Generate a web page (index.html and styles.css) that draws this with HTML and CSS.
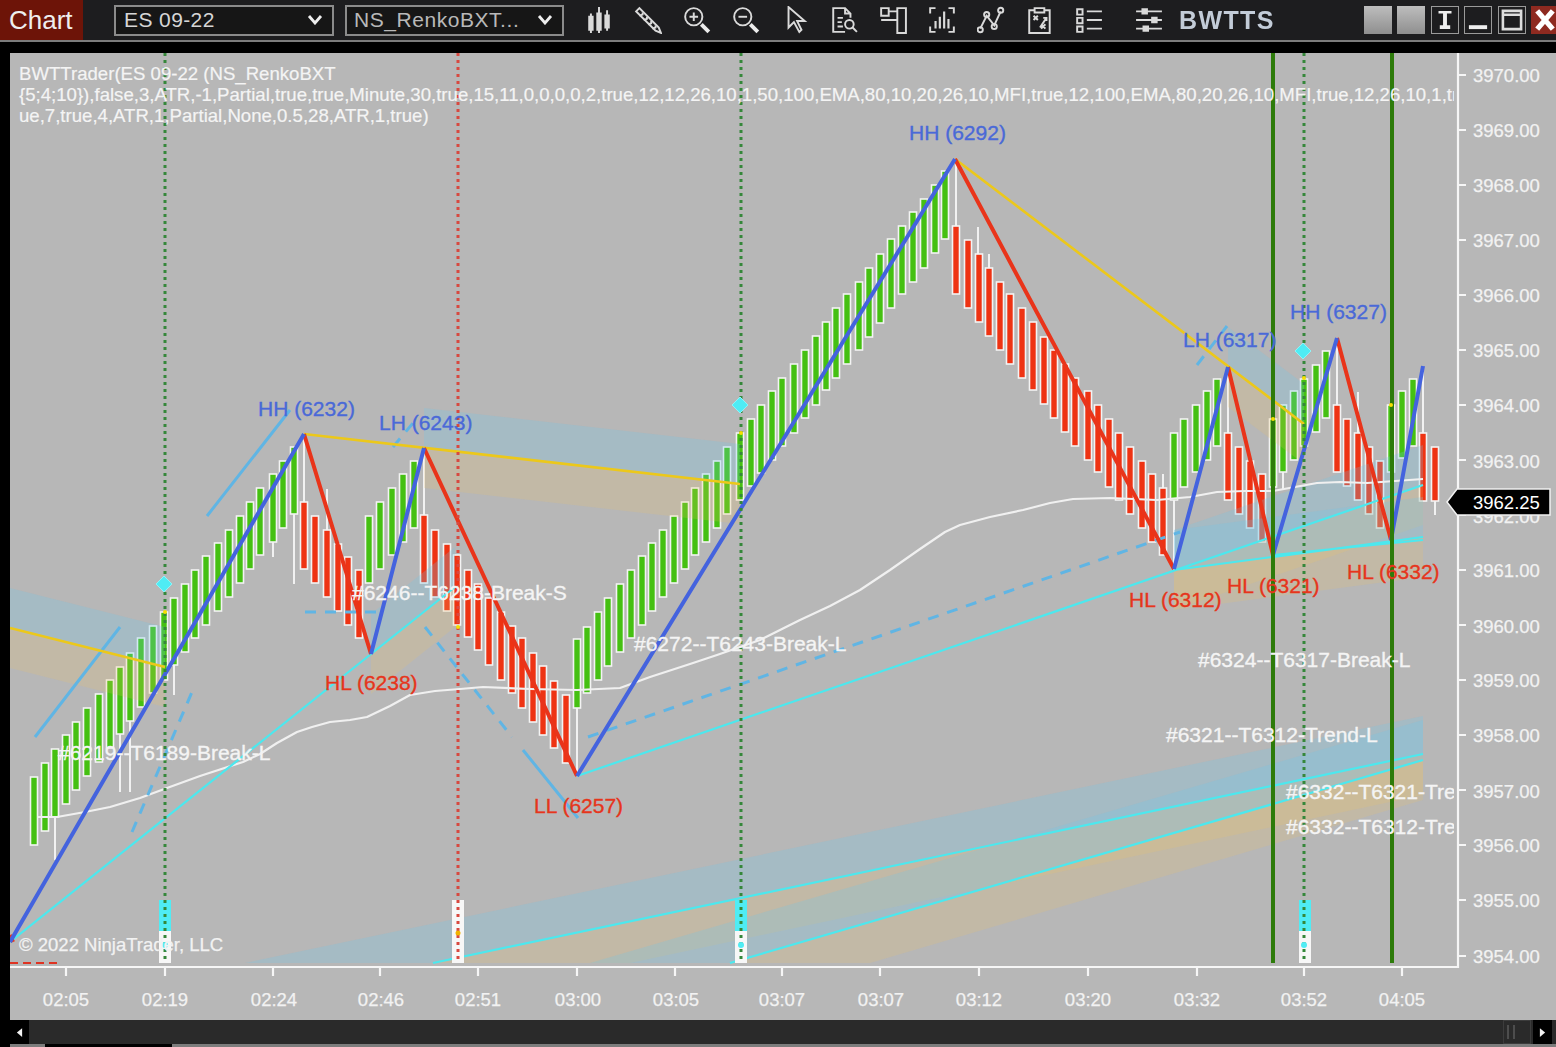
FILE: index.html
```html
<!DOCTYPE html>
<html lang="en">
<head>
<meta charset="utf-8">
<title>Chart</title>
<link rel="stylesheet" href="styles.css">
</head>
<body>
<div class="window">
  <header class="toolbar">
    <div class="tab">Chart</div>
    <div class="select select-instrument"><span>ES 09-22</span><svg class="chev" viewBox="0 0 16 10"><path d="M2 1l6 7 6-7"/></svg></div>
    <div class="select select-type"><span>NS_RenkoBXT...</span><svg class="chev" viewBox="0 0 16 10"><path d="M2 1l6 7 6-7"/></svg></div>
    <div class="tools">
      <svg class="ico" viewBox="0 0 26 26"><path class="fill" d="M3 9h5v14H3zM10.500 6h5v17h-5zM18 8h5v13h-5z"/><path d="M5.500 7v18M13 1v24M20.500 4v19"/></svg>
      <svg class="ico" viewBox="0 0 26 26"><path d="M2 5l3-3 18 18 2 5-5-2z"/><path d="M5 9l3-1 0-2M9 13l3-1 0-2M13 17l3-1 0-2M17 21l3-1 0-2"/></svg>
      <svg class="ico" viewBox="0 0 26 26"><circle cx="10" cy="10" r="8"/><path d="M10 6v8M6 10h8"/><path class="thick" d="M17 17l7 7"/></svg>
      <svg class="ico" viewBox="0 0 26 26"><circle cx="10" cy="10" r="8"/><path d="M6 10h8"/><path class="thick" d="M17 17l7 7"/></svg>
      <svg class="ico" viewBox="0 0 26 26"><path d="M7 1v19l5-5 5 9 2-2-4-8h7z"/></svg>
      <svg class="ico" viewBox="0 0 26 26"><path d="M14 24H3V2h11l5 5v4M14 2v5h5M7 11h5M7 15h4M7 19h5"/><circle cx="18" cy="17" r="4"/><path d="M21 20l4 4"/></svg>
      <svg class="ico" viewBox="0 0 26 26"><path d="M2 2h7v7H2zM9 5h8M2 13h7M9 13h8M17 2h8v23h-8z"/></svg>
      <svg class="ico" viewBox="0 0 26 26"><path d="M7 2H2v5M19 2h5v5M7 24H2v-5M19 24h5v-5"/><path class="fill" d="M6 14h2v7H6zM10 10h2v11h-2zM14 5h2v16h-2zM18 12h2v9h-2z"/></svg>
      <svg class="ico" viewBox="0 0 26 26"><path d="M3 21l6-12 7 9 6-13"/><circle cx="3" cy="22" r="2.400"/><circle cx="9" cy="8" r="2.400"/><circle cx="16" cy="19" r="2.400"/><circle cx="22" cy="4" r="2.400"/></svg>
      <svg class="ico" viewBox="0 0 26 26"><path d="M8 4H3v21h19V4h-5M8 2h9v4H8z"/><path d="M7 9l4 4M11 9l-4 4M13 20l6-9M16 11h3v3M14 17l4 4M18 17l-4 4"/></svg>
      <svg class="ico" viewBox="0 0 26 26"><path d="M2 3h5v5H2zM2 11h5v5H2zM2 19h5v5H2zM11 5h14M11 13h14M11 21h14"/></svg>
      <svg class="ico ico-sliders" viewBox="0 0 26 26"><path d="M1 5h24M1 13h24M1 21h24"/><path class="fill" d="M6 2h6v6H6zM15 10h6v6h-6zM7 18h6v6H7z"/></svg>
    </div>
    <div class="brand">BWTTS</div>
    <div class="winbtns">
      <div class="winbtn solid"></div>
      <div class="winbtn solid"></div>
      <div class="winbtn"><svg viewBox="0 0 20 20"><path class="w-fill" d="M5 3h10v2h-3.500v9H14v3H6v-3h2.500V5H5z"/></svg></div>
      <div class="winbtn"><svg viewBox="0 0 20 20"><path class="w-fill" d="M3 14h14v3H3z"/></svg></div>
      <div class="winbtn"><svg viewBox="0 0 20 20"><path class="w-line" d="M3 3h14v14H3zM3 6h14"/></svg></div>
      <div class="winbtn close"><svg viewBox="0 0 20 20"><path class="w-x" d="M4 3l12 14M16 3L4 17"/></svg></div>
    </div>
  </header>

  <main class="panel">
    <svg class="chart" viewBox="10 53 1546 967" width="1546" height="967">
      <defs><clipPath id="plot"><rect x="10" y="53" width="1444" height="914"/></clipPath></defs>

      <g clip-path="url(#plot)">
        <path class="wick" d="M55 817V860M120 733V792M130 721V792M174 665V695M273 542V557M294 514V584M304 434V502M327 489V530M424 449V516M577 708V775M956 160V226M978 227V254M989 254V268M1163 474V488M1174 500V570M1228 367V433M1283 472V490M1337 340V405M1358 392V433M1423 366V433M1435 501V515"/>
        <g id="candles"></g>

        <polygon class="blue" points="10,588 165,627 165,667 10,628"/>
        <polygon class="tan" points="10,628 165,667 165,707 10,668"/>
        <polygon class="blue" points="424,408 740,444 740,484 424,448"/>
        <polygon class="tan" points="424,448 740,484 740,524 424,488"/>
        <polygon class="blue" points="371,614 455,547 455,587 371,654"/>
        <polygon class="tan" points="371,654 455,587 455,627 371,694"/>
        <polygon class="blue" points="1228,327 1304,384 1304,424 1228,367"/>
        <polygon class="tan" points="1228,367 1304,424 1304,464 1228,407"/>
        <polygon class="blue" points="1174,530 1423,445 1423,485 1174,570"/>
        <polygon class="tan" points="1174,570 1423,485 1423,525 1174,610"/>
        <polygon class="blue" points="1174,530 1423,497 1423,537 1174,570"/>
        <polygon class="tan" points="1174,570 1423,537 1423,577 1174,610"/>
        <polygon class="blue" points="245,963 1423,716 1423,754 433,963"/>
        <polygon class="tan" points="433,963 1423,754 1423,795 630,963"/>
        <polygon class="blue" points="590,963 1423,720 1423,760 730,963"/>
        <polygon class="tan" points="730,963 1423,760 1423,800 870,963"/>

        <path class="ma" d="M37 817L57 817 85 812 110 807 140 798 167 788 200 776 243 762 260 754 277 743 297 732 312 727 330 722 350 720 367 717 390 706 410 695 435 691 460 689 483 687 530 689 577 690 620 688 650 677 690 664 717 655 760 640 800 620 830 606 860 590 890 570 920 549 945 532 960 525 990 517 1023 510 1050 503 1073 499 1110 498 1157 500 1190 497 1217 492 1245 491 1273 491 1295 487 1317 483 1340 482 1367 483 1395 481 1423 479"/>

        <path class="ray" d="M207 516L290 410M35 737L120 627M523 750L578 818"/>
        <path class="ray dashed" d="M132 832L195 685M305 612H382M393 447L413 423M425 627L512 737M588 737L1180 532M1197 365L1227 326"/>

        <path class="cyan" d="M10 942L455 587M577 776L1423 485M1174 570L1423 537M1273 555L1423 540M433 963L1423 754M730 963L1423 760"/>
        <path class="yellow" d="M10 628L165 667M304 434L740 484M955 159L1304 424"/>

        <path class="zz-red" d="M10 935L13 942M304 434L371 654M424 448L577 776M955 159L1174 569M1228 367L1273 555M1337 338L1391 540"/>
        <path class="zz-blue" d="M10 942L304 434M371 654L424 448M577 776L955 159M1174 569L1228 367M1273 555L1337 338M1391 540L1423 366"/>

        <rect class="mk-c" x="159" y="900" width="12" height="31"/><rect class="mk-w" x="159" y="931" width="12" height="32"/>
        <rect class="mk-w" x="452" y="900" width="12" height="63"/>
        <rect class="mk-c" x="735" y="900" width="12" height="31"/><rect class="mk-w" x="735" y="931" width="12" height="32"/>
        <rect class="mk-c" x="1299" y="900" width="12" height="31"/><rect class="mk-w" x="1299" y="931" width="12" height="32"/>

        <path class="dot-g" d="M165 53V963M741 53V963M1304 53V963"/>
        <path class="dot-r" d="M458 53V963"/>
        <path class="solid-g" d="M1273 53V963M1392 53V963"/>
        <path class="dash-r" d="M10 963H57"/>

        <circle class="pt-y" cx="165" cy="612" r="2"/><circle class="pt-y" cx="458" cy="627" r="2"/><circle class="pt-y" cx="741" cy="433" r="2"/><circle class="pt-y" cx="1273" cy="419" r="2"/><circle class="pt-y" cx="1304" cy="378" r="2"/><circle class="pt-y" cx="1391" cy="405" r="2"/>
        <circle class="pt-o" cx="458" cy="933" r="2.500"/><circle class="pt-c" cx="1304" cy="945" r="3"/><circle class="pt-c" cx="741" cy="945" r="3"/><circle class="pt-c" cx="165" cy="945" r="3"/>
        <polygon class="diamond" points="164,576 172,584 164,592 156,584"/>
        <polygon class="diamond" points="740,397 748,405 740,413 732,405"/>
        <polygon class="diamond" points="1303,343 1311,351 1303,359 1295,351"/>

        <text class="params" x="19" y="80">BWTTrader(ES 09-22 (NS_RenkoBXT</text>
        <text class="params" x="19" y="101">{5;4;10}),false,3,ATR,-1,Partial,true,true,Minute,30,true,15,11,0,0,0,0,2,true,12,12,26,10,1,50,100,EMA,80,10,20,26,10,MFI,true,12,100,EMA,80,20,26,10,MFI,true,12,26,10,1,tr</text>
        <text class="params" x="19" y="122">ue,7,true,4,ATR,1,Partial,None,0.5,28,ATR,1,true)</text>

        <text class="lb lb-b" x="258" y="416">HH (6232)</text>
        <text class="lb lb-b" x="379" y="430">LH (6243)</text>
        <text class="lb lb-b" x="909" y="140">HH (6292)</text>
        <text class="lb lb-b" x="1183" y="347">LH (6317)</text>
        <text class="lb lb-b" x="1290" y="319">HH (6327)</text>
        <text class="lb lb-r" x="325" y="690">HL (6238)</text>
        <text class="lb lb-r" x="534" y="813">LL (6257)</text>
        <text class="lb lb-r" x="1129" y="607">HL (6312)</text>
        <text class="lb lb-r" x="1227" y="593">HL (6321)</text>
        <text class="lb lb-r" x="1347" y="579">HL (6332)</text>
        <text class="lb lb-w" x="352" y="600">#6246--T6238-Break-S</text>
        <text class="lb lb-w" x="58" y="760">#6219--T6189-Break-L</text>
        <text class="lb lb-w" x="634" y="651">#6272--T6243-Break-L</text>
        <text class="lb lb-w" x="1198" y="667">#6324--T6317-Break-L</text>
        <text class="lb lb-w" x="1166" y="742">#6321--T6312-Trend-L</text>
        <text class="lb lb-w" x="1286" y="799">#6332--T6321-Tre</text>
        <text class="lb lb-w" x="1286" y="834">#6332--T6312-Tre</text>
        <text class="copy" x="19" y="951">© 2022 NinjaTrader, LLC</text>
      </g>

      <path class="axis" d="M1458 53V967H10M1458 75h8M1458 130h8M1458 185h8M1458 240h8M1458 295h8M1458 350h8M1458 405h8M1458 460h8M1458 515h8M1458 570h8M1458 625h8M1458 680h8M1458 735h8M1458 790h8M1458 845h8M1458 900h8M1458 956h8M66 967v9M165 967v9M273 967v9M380 967v9M478 967v9M577 967v9M675 967v9M782 967v9M880 967v9M979 967v9M1088 967v9M1197 967v9M1304 967v9M1402 967v9"/>

      <g class="prices">
        <text x="1473" y="82">3970.00</text><text x="1473" y="137">3969.00</text><text x="1473" y="192">3968.00</text><text x="1473" y="247">3967.00</text><text x="1473" y="302">3966.00</text><text x="1473" y="357">3965.00</text><text x="1473" y="412">3964.00</text><text x="1473" y="468">3963.00</text><text x="1473" y="523">3962.00</text><text x="1473" y="577">3961.00</text><text x="1473" y="633">3960.00</text><text x="1473" y="687">3959.00</text><text x="1473" y="742">3958.00</text><text x="1473" y="798">3957.00</text><text x="1473" y="852">3956.00</text><text x="1473" y="907">3955.00</text><text x="1473" y="963">3954.00</text>
      </g>
      <polygon class="tag" points="1447,502 1457,489 1550,489 1550,515 1457,515"/>
      <text class="tag-text" x="1473" y="509">3962.25</text>

      <g class="times">
        <text x="66" y="1006">02:05</text><text x="165" y="1006">02:19</text><text x="274" y="1006">02:24</text><text x="381" y="1006">02:46</text><text x="478" y="1006">02:51</text><text x="578" y="1006">03:00</text><text x="676" y="1006">03:05</text><text x="782" y="1006">03:07</text><text x="881" y="1006">03:07</text><text x="979" y="1006">03:12</text><text x="1088" y="1006">03:20</text><text x="1197" y="1006">03:32</text><text x="1304" y="1006">03:52</text><text x="1402" y="1006">04:05</text>
      </g>
    </svg>

    <div class="scrollbar">
      <div class="sb-btn"><svg viewBox="0 0 8 12"><path d="M7 1v10L1 6z"/></svg></div>
      <div class="sb-track"></div>
      <div class="sb-thumb"><i></i><i></i></div>
      <div class="sb-btn"><svg viewBox="0 0 8 12"><path d="M1 1v10l6-5z"/></svg></div>
    </div>
    <div class="footer-strip"><div class="notch"></div></div>
  </main>
</div>
<script src="script.js"></script>
</body>
</html>
```

FILE: styles.css
```css
* { box-sizing: border-box; }
html, body { margin: 0; height: 100%; background: #000; overflow: hidden; }
.window { width: 1556px; height: 1047px; display: flex; flex-direction: column; font-family: "Liberation Sans", Arial, sans-serif; filter: blur(0.6px); }

.toolbar { height: 42px; flex: none; display: flex; align-items: center; background: #1d1d1f; border-bottom: 2px solid #7c7c7c; color: #ddd; }
.tab { width: 83px; height: 40px; background: #6d1408; color: #eee; font-size: 26px; line-height: 40px; padding-left: 9px; flex: none; }
.select { height: 31px; border: 2px solid #8b8b8b; background: #161616; display: flex; align-items: center; justify-content: space-between; padding: 0 9px 0 8px; font-size: 21px; color: #d6d6d6; letter-spacing: .4px; flex: none; }
.select-instrument { width: 220px; margin-left: 31px; }
.select-type { width: 219px; margin-left: 11px; padding-left: 7px; color: #b9b9b9; letter-spacing: .55px; }
.chev { width: 16px; height: 10px; fill: none; stroke: #eee; stroke-width: 2.8; }
.tools { display: flex; align-items: center; gap: 21px; margin-left: 21px; }
.ico { width: 28px; height: 28px; fill: none; stroke: #dadada; stroke-width: 1.8; flex: none; }
.ico .fill { fill: #dadada; stroke: none; }
.ico .thick { stroke: #ececec; stroke-width: 3.6; }
.ico-sliders { margin-left: 11px; }
.brand { margin-left: 16px; font-size: 25px; font-weight: 700; letter-spacing: 1.4px; color: #c3ccd8; }
.winbtns { margin-left: auto; display: flex; gap: 5.5px; align-items: center; margin-right: -3px; }
.winbtn { width: 28px; height: 28px; border: 1.5px solid #9a9a9a; background: #1d1d1f; flex: none; }
.winbtn svg { display: block; width: 100%; height: 100%; }
.winbtn.solid { background: linear-gradient(#bdbdbd, #8f8f8f); border: none; }
.winbtn.close { background: #8e2a20; border-color: #8e2a20; }
.w-fill { fill: #eee; }
.w-line { fill: none; stroke: #ddd; stroke-width: 2; }
.w-x { fill: none; stroke: #fff; stroke-width: 4; }

.panel { flex: 1; margin-top: 11px; margin-left: 10px; display: flex; flex-direction: column; min-height: 0; }
.chart { display: block; flex: none; background: #b7b7b7; }

.wick { fill: none; stroke: #f1f1f1; stroke-width: 2; }
.bd-g { fill: #45c012; stroke: #f3f3f3; stroke-width: 1.6; }
.bd-r { fill: #ee3313; stroke: #f3f3f3; stroke-width: 1.6; }
.blue { fill: rgba(110, 200, 235, .25); }
.tan { fill: rgba(240, 195, 100, .2); }
.ma { fill: none; stroke: #f0f0f0; stroke-width: 2.2; stroke-linejoin: round; }
.ray { fill: none; stroke: #60b5e4; stroke-width: 3; }
.ray.dashed { stroke-dasharray: 11 9; }
.cyan { fill: none; stroke: #4ce8ee; stroke-width: 2.2; }
.yellow { fill: none; stroke: #ecc81a; stroke-width: 2.6; }
.zz-red { fill: none; stroke: #e9341a; stroke-width: 4; }
.zz-blue { fill: none; stroke: #4463de; stroke-width: 4; }
.mk-c { fill: #4fecf4; }
.mk-w { fill: #f7f7f7; }
.dot-g { fill: none; stroke: #35873a; stroke-width: 3; stroke-dasharray: 3 4; }
.dot-r { fill: none; stroke: #d8483f; stroke-width: 3; stroke-dasharray: 3 4; }
.solid-g { fill: none; stroke: #2d7b0a; stroke-width: 4; }
.dash-r { fill: none; stroke: #df3322; stroke-width: 2; stroke-dasharray: 8 5; }
.pt-y { fill: #f5e000; }
.pt-o { fill: #f0b400; }
.pt-c { fill: #4fecf4; }
.diamond { fill: #4fecf4; stroke: #8df3f7; stroke-width: 1; }

.params { font-size: 18.6px; fill: #f4f4f4; stroke: #f4f4f4; stroke-width: .2px; }
.lb { font-size: 21px; stroke-width: .35px; }
.lb-b { fill: #4a69d8; stroke: #4a69d8; }
.lb-r { fill: #e6351c; stroke: #e6351c; }
.lb-w { fill: #f4f4f4; stroke: #f4f4f4; }
.copy { font-size: 18.5px; fill: #f2f2f2; stroke: #f2f2f2; stroke-width: .25px; }
.axis { fill: none; stroke: #f6f6f6; stroke-width: 2.2; }
.prices text, .times text { font-size: 18.5px; fill: #f2f2f2; stroke: #f2f2f2; stroke-width: .25px; }
.times text { text-anchor: middle; }
.tag { fill: #000; stroke: #f1f1f1; stroke-width: 1.5; }
.tag-text { font-size: 18.5px; fill: #fff; }

.scrollbar { height: 24px; flex: none; background: #2a2a2a; display: flex; align-items: center; }
.sb-btn { width: 19px; height: 24px; background: #000; display: flex; align-items: center; justify-content: center; flex: none; }
.sb-btn svg { width: 7px; height: 11px; fill: #f2f2f2; }
.sb-track { flex: 1; }
.sb-thumb { width: 28px; height: 24px; background: #2a2a2a; border: 1.5px solid #3c3c3c; display: flex; align-items: center; justify-content: flex-start; gap: 4px; padding-left: 3px; flex: none; margin-right: 2px; }
.sb-thumb i { width: 2px; height: 14px; background: #4d4d4d; display: block; }
.scrollbar .sb-btn:last-child { margin-right: 4px; }
.footer-strip { height: 3px; background: #7d7d7d; flex: none; }
.notch { width: 127px; height: 3px; background: #000; margin-left: 35px; }
```

FILE: script.js
```js
var runs = [
  ["g", [[34,777,845],[45,763,831],[55,749,817],[66,735,804],[76,722,790],[87,708,776],[99,694,762],[110,680,748],[120,667,734],[130,653,721],[141,638,707],[153,626,693],[164,612,680],[174,598,665],[185,584,652],[195,570,638],[206,556,625],[218,543,611],[229,530,597],[240,516,583],[250,502,569],[260,488,555],[273,474,542],[283,461,528],[294,447,514]]],
  ["r", [[304,502,569],[315,516,583],[327,530,597],[338,544,611],[348,557,625],[359,570,638]]],
  ["g", [[369,516,583],[380,502,569],[392,488,555],[403,474,542],[414,461,528]]],
  ["r", [[424,515,583],[435,530,597],[447,544,611],[457,555,625],[468,570,637],[478,584,650],[489,598,665],[501,612,680],[512,626,693],[522,638,708],[533,653,722],[543,666,735],[554,681,748],[566,695,763]]],
  ["g", [[577,639,708],[587,627,693],[598,612,680],[608,598,666],[620,584,652],[631,570,638],[642,556,625],[652,543,611],[663,530,597],[674,516,583],[685,502,569],[695,488,555],[706,474,542],[717,461,528],[727,447,514],[740,433,500],[751,419,486],[761,405,473],[772,391,460],[782,378,446],[794,364,433],[805,350,418],[816,336,405],[826,322,390],[836,308,378],[847,294,364],[859,282,350],[869,268,337],[880,254,323],[891,239,308],[902,226,294],[913,212,282],[924,199,268],[935,185,253],[945,171,239]]],
  ["r", [[956,226,294],[968,240,308],[979,254,322],[989,268,336],[1000,282,350],[1010,294,364],[1022,308,378],[1033,322,390],[1044,337,404],[1054,350,418],[1065,364,432],[1075,378,446],[1088,391,460],[1098,405,472],[1109,419,487],[1119,433,500],[1130,447,514],[1142,461,528],[1152,474,542],[1163,488,555]]],
  ["g", [[1174,433,500],[1184,419,487],[1196,405,472],[1207,391,460],[1217,379,446]]],
  ["r", [[1228,433,500],[1239,447,514],[1250,461,528],[1262,474,542]]],
  ["g", [[1273,419,487],[1283,405,472],[1294,391,460],[1304,379,446],[1316,365,432],[1326,351,418]]],
  ["r", [[1337,405,472],[1347,419,486],[1358,433,500],[1369,447,514],[1380,461,528]]],
  ["g", [[1391,405,472],[1402,391,458],[1413,379,446]]],
  ["r", [[1423,433,501],[1435,447,501]]]
];
var host = document.getElementById("candles");
var NS = "http://www.w3.org/2000/svg";
runs.forEach(function (run) {
  run[1].forEach(function (c) {
    var r = document.createElementNS(NS, "rect");
    r.setAttribute("class", "bd-" + run[0]);
    r.setAttribute("x", c[0] - 3.5);
    r.setAttribute("y", c[1]);
    r.setAttribute("width", 7);
    r.setAttribute("height", c[2] - c[1]);
    host.appendChild(r);
  });
});
```
